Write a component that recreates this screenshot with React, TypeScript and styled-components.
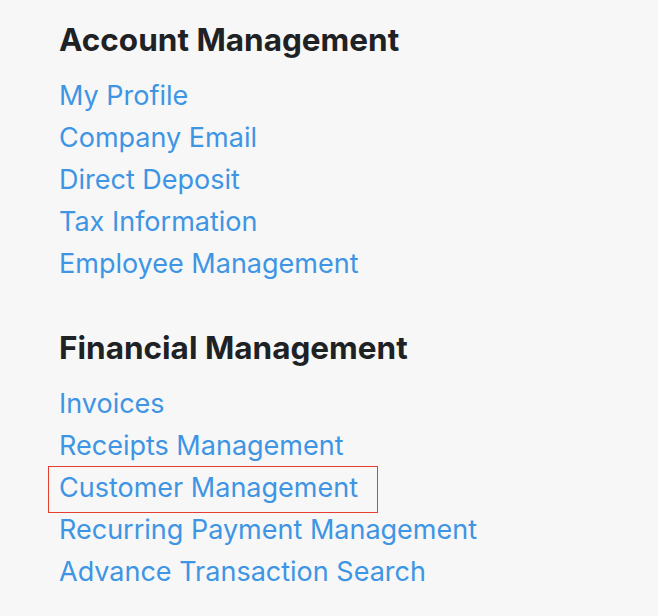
import { createGlobalStyle, styled } from "styled-components";

const GlobalStyle = createGlobalStyle`
    html, body {
        margin: 0;
        padding: 0;
        background: #f7f7f7;
    }
    body {
        font-family: Inter, "Noto Sans", "Liberation Sans", sans-serif;
    }
`;

const Page = styled.div`
    min-height: 616px;
    padding: 20px 0 0 59px;
    box-sizing: border-box;
`;

const Section = styled.section`
    margin-bottom: 43px;
`;

const Heading = styled.h2`
    margin: 0 0 15px;
    font-size: 31.5px;
    line-height: 40px;
    font-weight: 700;
    color: #1f2225;
`;

const LinkList = styled.ul`
    list-style: none;
    margin: 0;
    padding: 0;
`;

const Item = styled.li`
    line-height: 42px;
    height: 42px;
`;

const Link = styled.a<{ $active?: boolean }>`
    display: inline-block;
    position: relative;
    font-size: 27px;
    line-height: 42px;
    color: #3d95e4;
    text-decoration: none;

    ${({ $active }) =>
        $active &&
        `
        &::after {
            content: "";
            position: absolute;
            left: -11px;
            right: -20px;
            top: -1px;
            bottom: -4px;
            border: 1.5px solid #e5402f;
        }
    `}
`;

const sections = [
    {
        title: "Account Management",
        links: ["My Profile", "Company Email", "Direct Deposit", "Tax Information", "Employee Management"],
    },
    {
        title: "Financial Management",
        links: [
            "Invoices",
            "Receipts Management",
            "Customer Management",
            "Recurring Payment Management",
            "Advance Transaction Search",
        ],
    },
];

export default function App() {
    return (
        <>
            <GlobalStyle />
            <Page>
                {sections.map((section) => (
                    <Section key={section.title}>
                        <Heading>{section.title}</Heading>
                        <LinkList>
                            {section.links.map((label) => (
                                <Item key={label}>
                                    <Link href="#" $active={label === "Customer Management"}>
                                        {label}
                                    </Link>
                                </Item>
                            ))}
                        </LinkList>
                    </Section>
                ))}
            </Page>
        </>
    );
}
